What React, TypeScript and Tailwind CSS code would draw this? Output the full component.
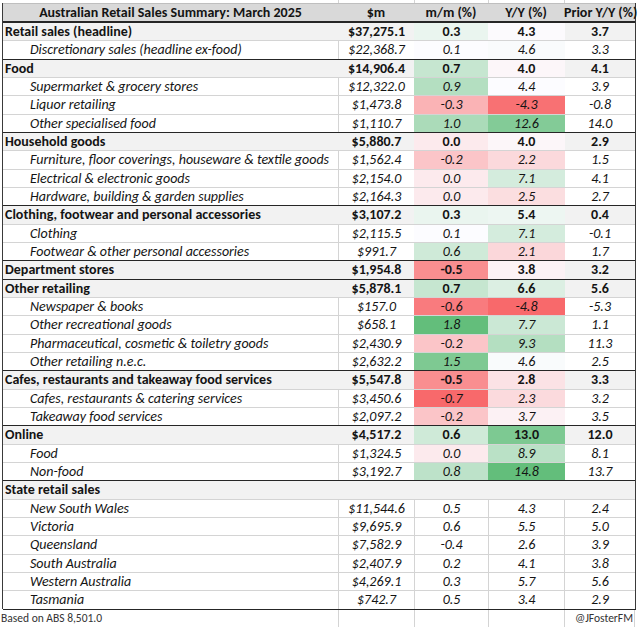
import React from 'react';

type Row = {
  label: string;
  bold?: boolean;
  m?: string;
  mm?: number;
  yy?: number;
  prior?: string;
  state?: boolean;
};

const rows: Row[] = [
  { label: 'Retail sales (headline)', bold: true, m: '$37,275.1', mm: 0.3, yy: 4.3, prior: '3.7' },
  { label: 'Discretionary sales (headline ex-food)', m: '$22,368.7', mm: 0.1, yy: 4.6, prior: '3.3' },
  { label: 'Food', bold: true, m: '$14,906.4', mm: 0.7, yy: 4.0, prior: '4.1' },
  { label: 'Supermarket & grocery stores', m: '$12,322.0', mm: 0.9, yy: 4.4, prior: '3.9' },
  { label: 'Liquor retailing', m: '$1,473.8', mm: -0.3, yy: -4.3, prior: '-0.8' },
  { label: 'Other specialised food', m: '$1,110.7', mm: 1.0, yy: 12.6, prior: '14.0' },
  { label: 'Household goods', bold: true, m: '$5,880.7', mm: 0.0, yy: 4.0, prior: '2.9' },
  { label: 'Furniture, floor coverings, houseware & textile goods', m: '$1,562.4', mm: -0.2, yy: 2.2, prior: '1.5' },
  { label: 'Electrical & electronic goods', m: '$2,154.0', mm: 0.0, yy: 7.1, prior: '4.1' },
  { label: 'Hardware, building & garden supplies', m: '$2,164.3', mm: 0.0, yy: 2.5, prior: '2.7' },
  { label: 'Clothing, footwear and personal accessories', bold: true, m: '$3,107.2', mm: 0.3, yy: 5.4, prior: '0.4' },
  { label: 'Clothing', m: '$2,115.5', mm: 0.1, yy: 7.1, prior: '-0.1' },
  { label: 'Footwear & other personal accessories', m: '$991.7', mm: 0.6, yy: 2.1, prior: '1.7' },
  { label: 'Department stores', bold: true, m: '$1,954.8', mm: -0.5, yy: 3.8, prior: '3.2' },
  { label: 'Other retailing', bold: true, m: '$5,878.1', mm: 0.7, yy: 6.6, prior: '5.6' },
  { label: 'Newspaper & books', m: '$157.0', mm: -0.6, yy: -4.8, prior: '-5.3' },
  { label: 'Other recreational goods', m: '$658.1', mm: 1.8, yy: 7.7, prior: '1.1' },
  { label: 'Pharmaceutical, cosmetic & toiletry goods', m: '$2,430.9', mm: -0.2, yy: 9.3, prior: '11.3' },
  { label: 'Other retailing n.e.c.', m: '$2,632.2', mm: 1.5, yy: 4.6, prior: '2.5' },
  { label: 'Cafes, restaurants and takeaway food services', bold: true, m: '$5,547.8', mm: -0.5, yy: 2.8, prior: '3.3' },
  { label: 'Cafes, restaurants & catering services', m: '$3,450.6', mm: -0.7, yy: 2.3, prior: '3.2' },
  { label: 'Takeaway food services', m: '$2,097.2', mm: -0.2, yy: 3.7, prior: '3.5' },
  { label: 'Online', bold: true, m: '$4,517.2', mm: 0.6, yy: 13.0, prior: '12.0' },
  { label: 'Food', m: '$1,324.5', mm: 0.0, yy: 8.9, prior: '8.1' },
  { label: 'Non-food', m: '$3,192.7', mm: 0.8, yy: 14.8, prior: '13.7' },
  { label: 'State retail sales', bold: true },
  { label: 'New South Wales', state: true, m: '$11,544.6', mm: 0.5, yy: 4.3, prior: '2.4' },
  { label: 'Victoria', state: true, m: '$9,695.9', mm: 0.6, yy: 5.5, prior: '5.0' },
  { label: 'Queensland', state: true, m: '$7,582.9', mm: -0.4, yy: 2.6, prior: '3.9' },
  { label: 'South Australia', state: true, m: '$2,407.9', mm: 0.2, yy: 4.1, prior: '3.8' },
  { label: 'Western Australia', state: true, m: '$4,269.1', mm: 0.3, yy: 5.7, prior: '5.6' },
  { label: 'Tasmania', state: true, m: '$742.7', mm: 0.5, yy: 3.4, prior: '2.9' },
];

// Excel-style 3 colour scale (red - white - green, midpoint = 50th percentile)
const RED = [248, 105, 107];
const MID = [252, 252, 255];
const GREEN = [99, 190, 123];

const makeScale = (values: number[]) => {
  const sorted = [...values].sort((a, b) => a - b);
  const min = sorted[0];
  const max = sorted[sorted.length - 1];
  const mid = sorted[Math.floor(sorted.length / 2)];
  return (v: number) => {
    let from = MID, to = MID, t = 0;
    if (v < mid) {
      from = RED; to = MID; t = (v - min) / (mid - min);
    } else {
      from = MID; to = GREEN; t = max === mid ? 0 : (v - mid) / (max - mid);
    }
    const c = from.map((f, i) => Math.round(f + (to[i] - f) * t));
    return `rgb(${c[0]}, ${c[1]}, ${c[2]})`;
  };
};

const scored = rows.filter(r => !r.state && r.mm !== undefined);
const mmColor = makeScale(scored.map(r => r.mm as number));
const yyColor = makeScale(scored.map(r => r.yy as number));

const GRID = '#d4d4d4';
const cols = 'grid grid-cols-[335px_76px_74px_76px_71px]';

const App: React.FC = () => {
  return (
    <div className="w-[640px] h-[627px] bg-white overflow-hidden font-[Carlito,Lato,sans-serif] text-[#141414]">
      {/* strip of the sheet above the table */}
      <div className={`${cols} h-[3px] ml-[3px] w-[633px]`}>
        <div />
        <div className="border-l border-[#d4d4d4]" />
        <div className="border-l border-[#d4d4d4]" />
        <div className="border-l border-[#d4d4d4]" />
        <div className="border-l border-[#d4d4d4]" />
      </div>

      <div className="ml-[2px] w-[634px] border-l border-r border-[#3a3a3a]">
        {/* Header */}
        <div className={`${cols} h-[19px] bg-[#d9d9d9] border-t border-[#bfbfbf] border-b border-b-[#262626] font-bold text-[14px] leading-[17px]`}>
          <div className="text-center whitespace-nowrap">Australian Retail Sales Summary: March 2025</div>
          <div className="text-center">$m</div>
          <div className="text-center">m/m (%)</div>
          <div className="text-center">Y/Y (%)</div>
          <div className="text-center whitespace-nowrap">Prior Y/Y (%)</div>
        </div>

        {rows.map((r, i) => {
          const base = r.bold ? '#f2f2f2' : '#ffffff';
          const mmFill = !r.state && r.mm !== undefined ? mmColor(r.mm) : undefined;
          const yyFill = !r.state && r.yy !== undefined ? yyColor(r.yy) : undefined;
          const line = r.bold ? base : GRID;
          return (
            <div
              key={i}
              className={`${cols} h-[18.34px] border-t text-[14px] leading-[17px] ${
                r.bold ? 'bg-[#f2f2f2] border-[#262626] font-bold' : 'bg-white border-[#d4d4d4] italic'
              }`}
            >
              <div className={`whitespace-nowrap ${r.bold ? 'pl-[2px]' : 'pl-[27px]'}`}>{r.label}</div>
              <div className="text-center border-l whitespace-nowrap" style={{ borderLeftColor: line }}>{r.m}</div>
              <div className="text-center border-l" style={{ backgroundColor: mmFill, borderLeftColor: mmFill ?? line }}>
                {r.mm !== undefined ? r.mm.toFixed(1) : ''}
              </div>
              <div className="text-center border-l" style={{ backgroundColor: yyFill, borderLeftColor: yyFill ?? mmFill ?? line }}>
                {r.yy !== undefined ? r.yy.toFixed(1) : ''}
              </div>
              <div className="text-center border-l" style={{ borderLeftColor: yyFill ?? line }}>{r.prior}</div>
            </div>
          );
        })}
      </div>

      {/* Footer */}
      <div className={`${cols} h-[18px] ml-[3px] w-[633px] border-t border-[#262626] text-[11.5px] leading-[16px] text-[#333333]`}>
        <div className="-ml-[2px]">Based on ABS 8,501.0</div>
        <div className="border-l border-[#d4d4d4]" />
        <div className="border-l border-[#d4d4d4]" />
        <div className="border-l border-[#d4d4d4]" />
        <div className="border-l border-r border-[#d4d4d4] text-right pr-[1px] whitespace-nowrap">@JFosterFM</div>
      </div>
    </div>
  );
};

export default App;
